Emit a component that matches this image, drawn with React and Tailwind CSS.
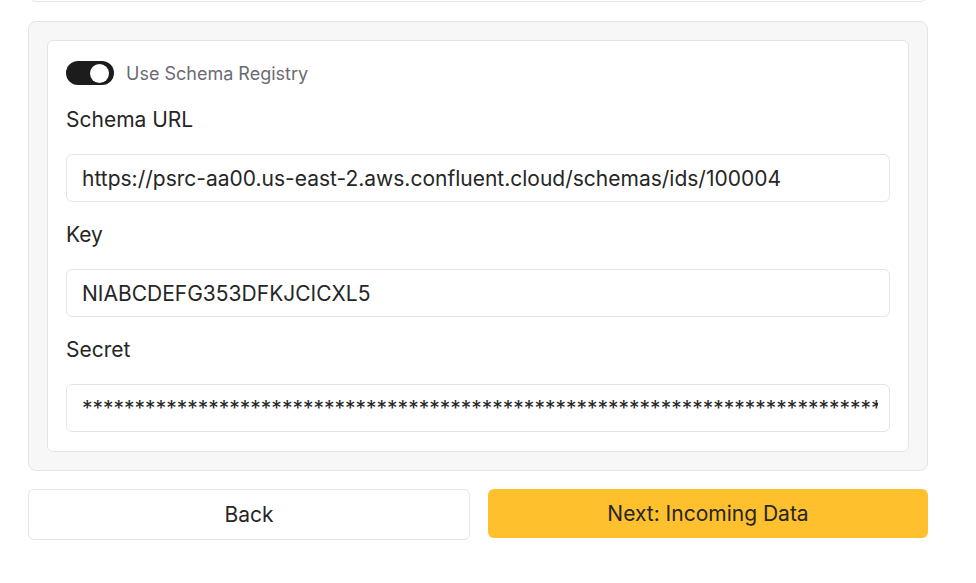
import React from "react";

const Field = ({ label, value }) => (
  <div className="flex flex-col">
    <label className="mt-[19px] mb-[20px] text-[21px] leading-[28px] text-[#262626]">{label}</label>
    <input
      readOnly
      value={value}
      className="h-[48px] w-full rounded-[6px] border border-[#e5e5e5] bg-white pl-[15px] pr-[11px] text-[21px] text-[#262626] outline-none"
    />
  </div>
);

export default function App() {
  return (
    <div className="h-[583px] w-[976px] bg-white pl-[28px] font-['Inter',sans-serif]">
      <div className="w-[900px]">
        <div className="-mt-[8px] h-[10px] rounded-b-[8px] border border-[#e5e5e5] bg-white" />
        <div className="mt-[19px] rounded-[8px] border border-[#e5e5e5] bg-[#f7f7f7] p-[18px]">
          <div className="rounded-[6px] border border-[#e5e5e5] bg-white px-[18px] pt-[20px] pb-[19px]">
            <div className="mb-[2px] flex h-[24px] items-center gap-[12px]">
              <div className="relative h-[24px] w-[48px] rounded-full bg-[#1c1c1c]">
                <div className="absolute right-[5px] top-[2.5px] h-[19px] w-[19px] rounded-full bg-white" />
              </div>
              <span className="text-[18px] text-[#6b6b73]">Use Schema Registry</span>
            </div>
            <Field label="Schema URL" value="https://psrc-aa00.us-east-2.aws.confluent.cloud/schemas/ids/100004" />
            <Field label="Key" value="NIABCDEFG353DFKJCICXL5" />
            <Field label="Secret" value={"*".repeat(90)} />
          </div>
        </div>
        <div className="mt-[18px] flex gap-[18px]">
          <button className="h-[51px] flex-1 rounded-[6px] border border-[#e3e3f3] bg-white text-[21px] text-[#262626]">Back</button>
          <button className="h-[49px] flex-1 rounded-[6px] bg-[#fec02d] text-[21px] text-[#262626]">Next: Incoming Data</button>
        </div>
      </div>
    </div>
  );
}
